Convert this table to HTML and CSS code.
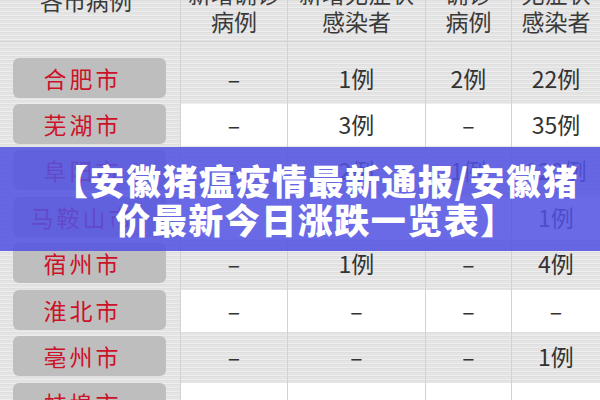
FILE: index.html
```html
<!DOCTYPE html>
<html lang="zh-CN">
<head>
<meta charset="utf-8">
<link rel="stylesheet" href="styles.css">
</head>
<body>
<div class="page">
  <div class="table">
    <div class="row head">
      <div class="cell c1"><span class="h h1">各市病例</span></div>
      <div class="cell"><span class="h">新增确诊<br>病例</span></div>
      <div class="cell"><span class="h">新增无症状<br>感染者</span></div>
      <div class="cell"><span class="h">确诊<br>病例</span></div>
      <div class="cell"><span class="h">无症状<br>感染者</span></div>
    </div>
    <div class="row r-first">
      <div class="cell c1"><span class="pill">合肥市</span></div>
      <div class="cell"><span class="v">–</span></div>
      <div class="cell"><span class="v">1例</span></div>
      <div class="cell"><span class="v">2例</span></div>
      <div class="cell"><span class="v">22例</span></div>
    </div>
    <div class="row r-white">
      <div class="cell c1"><span class="pill">芜湖市</span></div>
      <div class="cell"><span class="v">–</span></div>
      <div class="cell"><span class="v">3例</span></div>
      <div class="cell"><span class="v">–</span></div>
      <div class="cell"><span class="v">35例</span></div>
    </div>
    <div class="row r-gray">
      <div class="cell c1"><span class="pill">阜阳市</span></div>
      <div class="cell"><span class="v">–</span></div>
      <div class="cell"><span class="v">2例</span></div>
      <div class="cell"><span class="v">1例</span></div>
      <div class="cell"><span class="v">120例</span></div>
    </div>
    <div class="row r-white">
      <div class="cell c1"><span class="pill">马鞍山市</span></div>
      <div class="cell"><span class="v">–</span></div>
      <div class="cell"><span class="v">–</span></div>
      <div class="cell"><span class="v">–</span></div>
      <div class="cell"><span class="v">1例</span></div>
    </div>
    <div class="row r-gray">
      <div class="cell c1"><span class="pill">宿州市</span></div>
      <div class="cell"><span class="v">–</span></div>
      <div class="cell"><span class="v">1例</span></div>
      <div class="cell"><span class="v">–</span></div>
      <div class="cell"><span class="v">4例</span></div>
    </div>
    <div class="row r-white">
      <div class="cell c1"><span class="pill">淮北市</span></div>
      <div class="cell"><span class="v">–</span></div>
      <div class="cell"><span class="v">–</span></div>
      <div class="cell"><span class="v">–</span></div>
      <div class="cell"><span class="v">–</span></div>
    </div>
    <div class="row r-gray">
      <div class="cell c1"><span class="pill">亳州市</span></div>
      <div class="cell"><span class="v">–</span></div>
      <div class="cell"><span class="v">–</span></div>
      <div class="cell"><span class="v">–</span></div>
      <div class="cell"><span class="v">1例</span></div>
    </div>
    <div class="row r-white">
      <div class="cell c1"><span class="pill">蚌埠市</span></div>
      <div class="cell"><span class="v"></span></div>
      <div class="cell"><span class="v"></span></div>
      <div class="cell"><span class="v"></span></div>
      <div class="cell"><span class="v"></span></div>
    </div>
  </div>
  <div class="banner">
    <div class="title">【安徽猪瘟疫情最新通报/安徽猪<br>价最新今日涨跌一览表】</div>
  </div>
</div>
</body>
</html>
```

FILE: styles.css
```css
html, body {
  margin: 0;
  padding: 0;
}
body {
  width: 600px;
  height: 400px;
  overflow: hidden;
  font-family: "Noto Sans CJK SC", "Noto Sans", sans-serif;
}
.page {
  position: relative;
  width: 600px;
  height: 400px;
  overflow: hidden;
  background-color: #e4e4e4;
  background-image: repeating-linear-gradient(0deg, rgba(255,255,255,0.35) 0 1px, rgba(0,0,0,0) 1px 3px, rgba(0,0,0,0.025) 3px 4px);
}
.table {
  display: flex;
  flex-direction: column;
}
.row {
  display: grid;
  grid-template-columns: 180px 107px 138px 86px 89px;
  flex: none;
  --pt: 0px;
}
.cell {
  border-left: 1px solid #d2d2d2;
  padding-top: var(--pt);
  box-sizing: border-box;
  min-height: 0;
}
.cell.c1 {
  border-left: none;
}
.head {
  height: 42px;
  grid-template-rows: 41px;
  border-bottom: 1px solid #d6d6d6;
  box-sizing: border-box;
}
.head .cell {
  display: flex;
  align-items: flex-end;
  justify-content: center;
  padding-bottom: 6px;
  overflow: visible;
}
.head .cell.c1 {
  padding-bottom: 27px;
  padding-right: 8px;
}
.h {
  font-size: 23px;
  line-height: 28px;
  color: #3a3a3a;
  text-align: center;
  white-space: nowrap;
}
.r-first {
  height: 62px;
  grid-template-rows: 62px;
  --pt: 16px;
}
.r-gray {
  height: 51px;
  grid-template-rows: 51px;
  --pt: 4px;
}
.r-white {
  height: 42px;
  grid-template-rows: 42px;
  --pt: 0px;
}
.r-white .cell:not(.c1) {
  background: #ffffff;
}
.v {
  display: flex;
  height: 40px;
  align-items: center;
  justify-content: center;
  font-size: 23px;
  color: #333333;
  white-space: nowrap;
}
.pill {
  display: flex;
  box-sizing: border-box;
  margin-left: 13px;
  width: 153px;
  height: 40px;
  align-items: center;
  justify-content: center;
  padding-right: 14px;
  background: #bebebe;
  border-radius: 6px;
  color: #cc1229;
  font-size: 23px;
  letter-spacing: 3px;
  white-space: nowrap;
}
.banner {
  position: absolute;
  left: 0;
  top: 147px;
  width: 600px;
  height: 104px;
  background: rgba(82, 82, 226, 0.86);
  display: flex;
  align-items: center;
  justify-content: center;
  padding-left: 32px;
  box-sizing: border-box;
}
.title {
  color: #ffffff;
  font-size: 35px;
  font-weight: 900;
  line-height: 39px;
  letter-spacing: 1.5px;
  text-align: center;
  white-space: nowrap;
}
```
